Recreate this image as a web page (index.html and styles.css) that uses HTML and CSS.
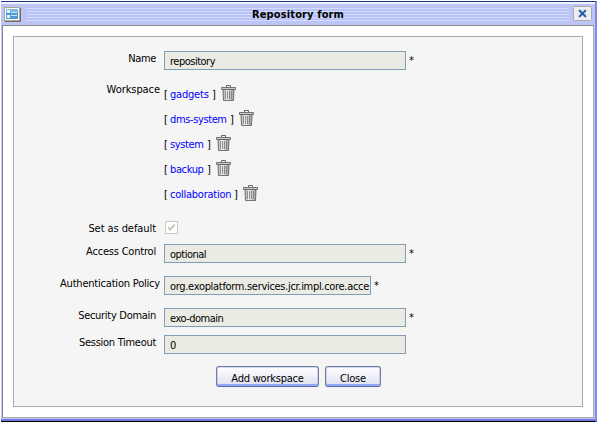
FILE: index.html
```html
<!DOCTYPE html>
<html lang="en">
<head>
<meta charset="utf-8">
<title>Repository form</title>
<link rel="stylesheet" href="styles.css">
</head>
<body>
<svg width="0" height="0" class="defs">
  <defs>
    <linearGradient id="metal"><stop offset="0" stop-color="#aaa"/><stop offset=".35" stop-color="#f4f4f4"/><stop offset="1" stop-color="#999"/></linearGradient>
    <symbol id="trash" viewBox="0 0 15 16">
      <path d="M5.500 2V.5h4V2" fill="none" stroke="#666"/>
      <path d="M2 4.500h11l-.5 11h-10z" fill="url(#metal)" stroke="#666" stroke-width=".9"/>
      <path d="M.5 2.500h14v2H.5z" fill="#ccc" stroke="#555" stroke-width=".8"/>
      <path d="M4.500 6v8M6.500 6v8M8.500 6v8M10.500 6v8" stroke="#777" stroke-width=".8"/>
    </symbol>
  </defs>
</svg>
<div class="window">
  <div class="titlebar">
    <svg class="app-icon" width="17" height="15" viewBox="0 0 17 15">
      <path d="M0 0h16v14H0z" fill="#aaa59b"/><path d="M1 14h15V1h1v14H1z" fill="#716d67"/>
      <path d="M1 1h14v12H1z" fill="#fff"/><path d="M2 2h12v10H2z" fill="#4f9bd2"/><path d="M2 2h12v3H2z" fill="#7bb8e2"/>
      <path d="M3 3h3v3H3zM3 8h3v3H3z" fill="#e9f6ff"/><path d="M7 5.500h6M7 8.500h6" stroke="#c8e6fa"/>
    </svg>
    <div class="stripes"><h1 class="title">Repository form</h1></div>
    <svg class="close" width="19" height="15" viewBox="0 0 19 15">
      <rect x=".5" y=".5" width="18" height="14" rx="1" fill="#eeeef2" stroke="#aaa"/>
      <path d="M6.500 4.500l6 6M12.500 4.500l-6 6" stroke="#9bc7e6" stroke-width="3"/>
      <path d="M6 4l7 7M13 4l-7 7" stroke="#174d8c" stroke-width="1.500"/>
    </svg>
  </div>
  <div class="content">
    <div class="panel">
      <div class="row"><span class="label">Name</span><div class="field">repository</div><span class="star">*</span></div>
      <div class="row spaces">
        <span class="label outdent wide">Workspace</span>
        <div class="list">
          <div class="item"><span class="bracket">[</span><a class="gadgets">gadgets</a><span class="bracket">]</span><svg class="trash"><use href="#trash"/></svg></div>
          <div class="item"><span class="bracket">[</span><a class="dms">dms-system</a><span class="bracket">]</span><svg class="trash"><use href="#trash"/></svg></div>
          <div class="item"><span class="bracket">[</span><a class="system">system</a><span class="bracket">]</span><svg class="trash"><use href="#trash"/></svg></div>
          <div class="item"><span class="bracket">[</span><a class="backup">backup</a><span class="bracket">]</span><svg class="trash"><use href="#trash"/></svg></div>
          <div class="item"><span class="bracket">[</span><a class="collab">collaboration</a><span class="bracket">]</span><svg class="trash"><use href="#trash"/></svg></div>
        </div>
      </div>
      <div class="row default"><span class="label wide">Set as default</span>
        <svg class="check" width="13" height="13" viewBox="0 0 13 13"><path d="M.5.5h12v12H.5z" fill="#fff" stroke="#cac8bb"/><path d="M3 5v3l2 2 5-5V2L5 7z" fill="#cac8bb"/></svg></div>
      <div class="row access"><span class="label medium">Access Control</span><div class="field">optional</div><span class="star">*</span></div>
      <div class="row auth"><span class="label outdent medium">Authentication Policy</span><div class="field short">org.exoplatform.services.jcr.impl.core.acce</div><span class="star">*</span></div>
      <div class="row security"><span class="label normal">Security Domain</span><div class="field">exo-domain</div><span class="star">*</span></div>
      <div class="row session"><span class="label normal">Session Timeout</span><div class="field">0</div></div>
      <div class="actions"><button class="btn add">Add workspace</button><button class="btn shut">Close</button></div>
    </div>
  </div>
</div>
</body>
</html>
```
FILE: styles.css
```css
* { box-sizing: border-box; }
body { margin: 0; width: 597px; height: 422px; overflow: hidden; background: #fff; color: #000; font: 11px/15px "DejaVu Sans Condensed", "DejaVu Sans", sans-serif; font-stretch: condensed; letter-spacing: -.38px; }
.defs { display: block; height: 0; }
.window { margin-top: 1px; margin-left: 1px; width: 596px; height: 421px; border-top: 1px solid #253980; border-right: 2px solid #8487ed; border-bottom: 1px solid #000; background: #bdc5f7; box-shadow: inset 0 -2px #7177dc; }
.titlebar { height: 23px; padding: 3px 3px 0; border-top: 2px solid #eef3ff; display: flex; }
.app-icon { flex: none; }
.stripes { flex: none; margin: 1px 4px 0 6px; width: 542px; height: 13px; background: repeating-linear-gradient(#d4dcff 0 1px, #b9c3f5 1px 3px); }
.close { flex: none; margin-top: -1px; }
.title { margin: -1px 0 0 225px; font-size: 11px; line-height: 15px; letter-spacing: .13px; color: #000; white-space: nowrap; }
.content { margin: 0 1px; height: 393px; border: 1px solid #888; border-right-color: #aaa; border-bottom-color: #aaa; background: #fff; padding: 10px; }
.panel { width: 570px; height: 371px; border: 1px solid #aaa; background: #f5f5f5; padding-top: 14px; }
.row { display: flex; height: 19px; }
.label { flex: none; width: 142px; margin-right: 8px; text-align: right; white-space: nowrap; }
.outdent { width: 146px; margin-right: 4px; }
.normal { letter-spacing: -.29px; }
.medium { letter-spacing: -.2px; }
.wide { letter-spacing: -.07px; }
.field { flex: none; width: 242px; height: 19px; border: 1px solid #7f9db9; background: #ebebe4; padding: 2px 0 0 5px; letter-spacing: -.5px; white-space: nowrap; overflow: hidden; }
.short { width: 207px; letter-spacing: -.31px; }
.star { margin: 2px 0 0 3px; }
.spaces { height: 125px; margin-top: 11px; }
.spaces .label { padding-top: 1px; }
.list { display: flex; flex-direction: column; }
.item { height: 25px; display: flex; align-items: center; }
.bracket { width: 6px; flex: none; padding-top: 1px; }
.item a { padding-top: 1px; color: #00f; white-space: nowrap; }
.item a + .bracket { margin-left: 3px; }
.gadgets { width: 39px; letter-spacing: -.2px; }
.dms { width: 57px; }
.system, .backup { width: 34px; }
.collab { width: 61px; letter-spacing: -.25px; }
.trash { width: 15px; height: 16px; margin: -1px 0 0 3px; }
.default { height: 13px; margin-top: 15px; }
.check { margin-left: 1px; }
.access { margin-top: 10px; }
.auth, .security { margin-top: 13px; }
.session { margin-top: 8px; }
.actions { display: flex; gap: 6px; margin: 12px 0 0 202px; }
.btn { height: 21px; border: 1px solid #777b91; border-bottom-color: #5467b0; border-radius: 3px; padding: 3px 0 0; background: linear-gradient(#fff, #efeff8 50%, #dedff0); box-shadow: inset 0 -2px #93a9f4, inset 0 1px #cbdcfb, inset 1px 0 #c5d4f5, inset -1px 0 #c5d4f5; color: #000; font: inherit; letter-spacing: -.22px; }
.add { width: 103px; }
.shut { width: 56px; }
```
